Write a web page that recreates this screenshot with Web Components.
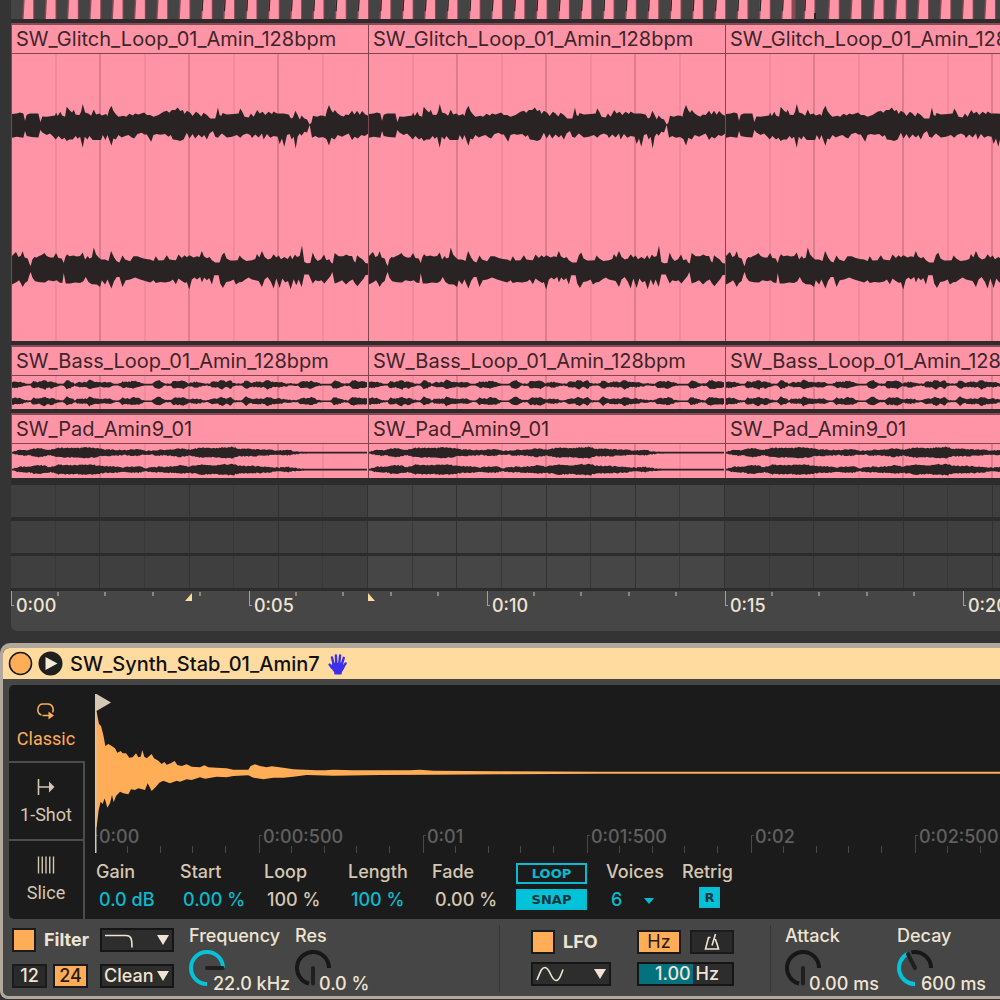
<!DOCTYPE html>
<html lang="en">
<head>
<meta charset="utf-8">
<title>Arrangement</title>
<style>
  body { margin: 0; background: #343434; overflow-x: hidden; font-family: Inter, "Liberation Sans", sans-serif; font-size: 18px; line-height: 22px; color: #efe4d3; }
</style>
</head>
<body>
<daw-arrangement></daw-arrangement>
<sampler-device></sampler-device>

<script>
const define = (name, html, setup) => {
  const template = document.createElement('template');
  template.innerHTML = html;
  customElements.define(name, class extends HTMLElement {
    connectedCallback() {
      if (this.shadowRoot) return;
      this.attachShadow({ mode: 'open' }).append(template.content.cloneNode(true));
      if (setup) setup(this, this.shadowRoot);
    }
  });
};
/* How many timeline pieces of a given width it takes to cover the window. */
const cover = (width, inset = 11) => Math.ceil((window.innerWidth - inset) / width);

/* Outlines are x,y pairs in a space three times finer than the pixels on screen. */
const glitchA = {
  top: '36 342 50 340 60 337 70 340 75 362 80 344 90 340 115 340 121 366 127 349 140 350 155 348 165 346 168 337 173 348 181 335 186 346 195 350 200 320 208 330 216 337 221 329 227 344 238 345 243 335 248 312 255 337 265 340 273 347 281 328 288 343 298 340 305 346 318 342 322 348 327 330 334 317 340 333 348 343 355 350 370 347 378 350 388 341 398 346 405 340 415 343 432 337 440 345 450 345 460 350 475 345 490 335 500 332 507 338 515 330 525 330 533 322 540 333 548 330 553 342 560 332 570 338 577 348 587 335 595 340 603 349 610 338 620 345 630 355 645 355 648 345 653 322 658 345 663 348 667 339 680 343 700 342 715 340 720 325 726 335 733 350 745 352 752 340 760 350 771 330 778 340 787 335 795 345 805 335 815 342 820 334 830 340 850 340 865 343 872 355 878 352 885 332 892 345 898 358 904 346 912 355 920 358 928 373 933 368 938 347 950 350 960 346 970 347 975 350 980 330 986 315 992 330 998 338 1003 330 1012 340 1022 347 1030 349 1036 343 1045 345 1055 332 1062 343 1070 332 1078 344 1085 333 1095 343 1104 348',
  bottom: '36 413 50 410 70 413 75 393 80 408 95 411 115 412 121 390 127 397 140 405 150 400 160 410 167 418 175 408 186 418 193 413 200 423 208 418 218 418 227 408 233 416 240 410 248 443 254 410 262 418 268 408 278 420 290 420 303 420 308 405 316 420 322 405 334 437 340 415 347 418 355 405 365 412 375 408 385 405 395 412 402 415 412 402 425 398 432 403 440 403 453 425 460 405 470 402 480 404 495 402 505 410 512 405 518 418 530 420 540 423 550 418 560 398 568 415 577 402 585 415 595 403 605 412 612 405 620 418 628 400 638 393 645 410 653 413 660 405 665 400 680 412 695 410 710 405 720 413 728 405 740 400 750 405 755 414 765 403 775 412 785 400 790 418 800 402 810 413 820 408 832 410 838 432 845 415 852 440 860 405 868 402 874 418 880 410 886 446 892 410 898 400 904 407 912 395 920 397 928 375 935 413 945 408 955 413 968 411 978 417 986 436 993 413 1003 418 1012 405 1025 410 1035 405 1045 400 1055 420 1063 410 1072 415 1083 405 1093 408 1104 400'
};
const glitchB = {
  top: '36 107 43 100 48 95 55 110 62 107 68 93 74 112 83 115 88 130 92 137 97 118 103 110 110 112 117 107 125 104 133 98 140 107 150 112 160 112 168 98 175 113 185 115 191 128 196 110 201 102 208 108 220 106 230 109 240 107 248 97 255 118 263 107 268 115 275 112 281 82 288 103 296 112 303 118 315 118 325 122 333 92 342 112 350 123 358 127 367 106 375 118 390 123 400 108 412 108 425 113 437 116 450 118 460 122 467 108 475 121 490 120 500 105 508 118 518 119 527 120 535 103 545 113 553 105 560 111 568 105 580 112 590 108 598 110 605 92 611 108 620 114 628 110 635 120 645 127 658 127 665 105 672 97 679 115 690 121 702 121 712 120 718 106 726 115 738 122 755 120 765 116 770 101 777 112 785 92 793 110 803 118 812 115 820 102 828 112 835 106 842 117 852 110 862 116 870 105 876 117 884 103 890 110 898 107 905 76 912 125 920 129 930 128 937 97 944 113 952 122 962 117 971 103 978 120 987 117 992 127 997 130 1003 98 1015 108 1028 108 1038 103 1046 107 1055 107 1061 123 1065 127 1070 105 1078 112 1087 118 1095 128 1104 130',
  bottom: '36 193 50 185 57 180 63 190 68 200 75 188 83 182 88 165 92 155 97 172 105 183 120 186 135 187 145 180 160 183 170 180 178 187 187 188 191 158 197 190 210 190 225 187 240 188 250 183 257 170 265 185 275 192 290 193 300 200 305 180 315 193 322 178 334 205 342 182 350 170 358 170 367 200 377 180 390 178 405 172 420 178 435 182 450 187 460 180 467 188 480 185 495 187 510 184 518 178 527 192 535 175 545 182 555 188 560 185 567 208 575 178 583 172 590 178 600 170 605 187 612 172 620 180 627 173 635 193 642 165 655 165 660 190 668 203 678 185 690 183 700 178 707 193 717 186 725 185 735 178 745 172 755 178 765 180 775 182 785 200 793 178 802 170 812 185 820 205 828 175 838 203 846 175 855 187 863 182 871 207 880 177 888 195 895 178 904 200 912 163 925 163 937 190 945 180 955 183 963 180 972 190 982 178 990 168 996 155 1003 190 1015 185 1025 180 1037 193 1047 183 1057 178 1063 188 1071 198 1080 187 1090 175 1095 165 1104 163'
};
const synth = {
  top: '287 215 290 215 297 252 303 258 310 285 316 318 325 312 335 318 345 325 352 338 362 333 368 340 378 340 388 353 398 352 408 340 415 352 422 350 427 330 433 350 440 355 455 342 462 355 475 362 485 372 493 366 500 374 512 370 524 363 532 375 545 378 560 373 575 380 600 382 613 376 625 382 650 383 680 385 700 389 745 389 752 378 765 373 780 378 800 382 815 379 850 383 880 388 950 391 975 391 1000 389 1060 391 1140 391 1230 391 1260 389 1300 392 1500 394 1800 395 3100 395',
  bottom: '287 560 290 560 296 510 302 485 308 492 314 475 322 503 330 490 336 465 341 487 348 468 360 455 370 460 385 463 393 448 405 450 415 445 435 450 443 430 455 453 468 440 478 428 490 422 510 430 530 422 540 425 560 418 575 420 600 412 615 416 650 410 680 412 700 408 745 406 760 413 790 418 820 413 850 413 880 410 920 405 1000 407 1140 405 1300 404 1500 403 1800 401 3100 401'
};
/* Symmetric outlines: x, half height. */
const bass = '36 10 60 9 80 3 93 2 98 10 112 8 125 10 135 15 143 8 155 11 172 4 190 2 200 13 212 10 225 3 235 8 250 7 262 8 268 15 280 10 300 7 325 8 345 3 358 2 368 10 390 8 402 12 420 8 435 2 458 2 468 11 480 13 495 4 512 3 522 11 540 10 553 13 567 4 585 8 600 7 620 2 632 5 640 9 655 8 668 14 680 7 692 13 705 3 730 3 738 14 755 6 775 9 790 7 805 14 820 8 840 8 862 4 895 3 905 10 925 9 937 12 955 5 970 2 995 2 1005 13 1020 8 1035 3 1050 4 1060 13 1085 10 1104 8';
const pad = '36 2 50 6 70 9 85 8 110 13 125 13 150 8 175 14 200 14 230 13 258 16 285 14 310 10 345 9 375 7 395 9 415 10 440 5 470 8 500 9 520 10 545 13 570 9 605 15 640 13 665 15 700 17 720 11 750 11 780 10 810 8 840 6 865 8 885 5 905 3 940 2 1104 2';

const pairs = text => {
  const n = text.split(' ').map(Number), out = [];
  for (let i = 0; i < n.length; i += 2) out.push([n[i], n[i + 1]]);
  return out;
};
const closed = (top, bottom, dy = 0) =>
  'M' + [...top, ...[...bottom].reverse()].map(([x, y]) => `${x} ${y + dy}`).join('L') + 'Z';
const outline = ({ top, bottom }, dy) => closed(pairs(top), pairs(bottom), dy);
const mirrored = (text, centre, seed) => {
  const points = pairs(text), top = [], bottom = [];
  const noise = n => { const v = Math.sin(n * 127.1 + seed * 311.7) * 43758.5; return (v - Math.floor(v)) * 2 - 1; };
  const half = x => {
    let i = 1;
    while (i < points.length - 1 && points[i][0] < x) i++;
    const [x0, h0] = points[i - 1], [x1, h1] = points[i];
    return h0 + (h1 - h0) * (x - x0) / (x1 - x0);
  };
  for (let x = 36; x <= 1107; x += 4) {
    const h = half(Math.min(x, 1104)), wobble = Math.max(0, Math.min(h - 2, 1.8));
    top.push([x, centre - Math.max(2.4, h + wobble * noise(x))]);
    bottom.push([x, centre + Math.max(2.4, h + wobble * noise(x + .5))]);
  }
  return closed(top, bottom);
};
/* Each view starts just under the clip's title bar. */
const waves = {
  glitch: { box: '36 162 1071 860', d: outline(glitchA, 0) + outline(glitchB, 660) },
  bass: { box: '36 123 1071 102', d: mirrored(bass, 149, 1) + mirrored(bass, 199, 2) },
  pad: { box: '36 327 1071 105', d: mirrored(pad, 353, 3) + mirrored(pad, 404, 4) },
  synth: { box: '285 135 2715 426', d: outline(synth, 0) }
};

define('wave-form', `
  <style>
    :host { display: block; }
    svg { display: block; width: 100%; height: 100%; overflow: visible; }
    path { fill: currentColor; }
  </style>
  <svg preserveAspectRatio="xMinYMin slice" aria-hidden="true"><path/></svg>`,
  (host, root) => {
    const wave = waves[host.getAttribute('kind')];
    root.querySelector('svg').setAttribute('viewBox', wave.box);
    root.querySelector('path').setAttribute('d', wave.d);
  });

define('beat-strip', `
  <style>
    :host { display: block; height: 19px; background: #444; overflow: hidden; }
    svg { display: block; }
  </style>
  <svg width="2000" height="19" aria-hidden="true"></svg>`,
  (host, root) => {
    let marks = '';
    for (let k = 0; k < 88; k++) {
      const x = 12 + k * 22.32 + (k > 35 ? 2 : 0);
      marks += `<path fill="#8a4a55" d="M${x - .8} 19L${x + .2} 0h11v19z"/>`
        + `<path fill="#ff94a7" d="M${x + .6} 19L${x + 1.6} 0h8.6v19z"/>`;
      if (k > 7 && k < 36) marks += `<path fill="#2a2323" d="M${x} 11L${x + .8} 0h1l-.6 11z"/>`;
    }
    marks += '<path fill="#8a4a55" d="M780.500 0h4v19h-4z"/><path fill="#2a2323" d="M803 13h2v6h-2z"/>';
    root.querySelector('svg').innerHTML = marks;
  });

define('audio-clip', `
  <style>
    :host { display: flex; flex-direction: column; flex: none; box-sizing: border-box; width: 357px; overflow: hidden;
            border-left: 1px solid #80454f; border-top: 2px solid #8a4a55; background: #ff94a7; color: #3d2529; }
    header { flex: none; height: 29px; box-sizing: border-box; border-bottom: 1px solid #80454f; padding: 1px 4px 0;
             white-space: nowrap; font-size: 20px; line-height: 26px; }
    .body { flex: 1; min-height: 0; display: grid; grid-template-columns: repeat(8, 1fr); }
    i { grid-row: 1; border-right: 2px solid #f08b9d; }
    i:nth-of-type(even) { border-color: #dc7d8e; }
    i:last-of-type { border: 0; }
    wave-form { grid-row: 1; grid-column: 1 / -1; color: #292323; }
  </style>
  <header><slot></slot></header>
  <div class="body"><i></i><i></i><i></i><i></i><i></i><i></i><i></i><i></i></div>`,
  (host, root) => {
    const wave = document.createElement('wave-form');
    wave.setAttribute('kind', host.getAttribute('kind'));
    root.querySelector('.body').append(wave);
    root.querySelectorAll('i').forEach((line, n) => { line.style.gridColumn = n + 1; });
  });

define('clip-track', `
  <style>
    :host { display: flex; overflow: hidden; }
  </style>`,
  (host, root) => {
    for (let n = 0; n < cover(357); n++) {
      const clip = document.createElement('audio-clip');
      clip.setAttribute('kind', host.getAttribute('kind'));
      clip.textContent = host.getAttribute('name');
      root.append(clip);
    }
  });

define('empty-lane', `
  <style>
    :host { display: flex; overflow: hidden; height: 32px; }
    div { flex: none; box-sizing: border-box; width: 357px; display: grid; grid-template-columns: repeat(8, 1fr); background: #3f3f3f; }
    div:nth-of-type(even) { background: #464646; }
    i { border-right: 1px solid #383838; }
    i:nth-of-type(even) { border-color: #313131; }
  </style>`,
  (host, root) => {
    for (let n = 0; n < cover(357); n++) {
      const bar = document.createElement('div');
      bar.innerHTML = '<i></i>'.repeat(8);
      root.append(bar);
    }
  });

define('song-ruler', `
  <style>
    :host { display: flex; position: relative; overflow: hidden; height: 40px; background: #464646; border-bottom-left-radius: 6px; font-weight: 500; }
    .span { flex: none; width: 238px; display: grid; grid-template-columns: repeat(5, 1fr); align-items: start; }
    .major { grid-area: 1 / 1 / 2 / 3; border-left: 1px solid #a89f94; height: 15px; display: flex; }
    .major::before { content: ""; width: 2px; border-bottom: 1px solid #a89f94; }
    .major span { padding-left: 2px; line-height: 30px; }
    .minor { grid-row: 1; justify-self: end; width: 2px; height: 4px; background: #8c857c; margin-top: 1px; }
    svg { position: absolute; top: 2px; width: 7px; height: 8px; fill: #ffdb9f; }
    .start { left: 174px; } .end { left: 357px; }
  </style>
  <svg class="start" viewBox="0 0 7 8"><path d="M7 0v8H0z"/></svg>
  <svg class="end" viewBox="0 0 7 8"><path d="M0 0v8h7z"/></svg>`,
  (host, root) => {
    for (let n = 0; n < cover(238); n++) {
      const span = document.createElement('div'), s = n * 5;
      span.className = 'span';
      span.innerHTML = `<div class="major"><span>${Math.floor(s / 60)}:${String(s % 60).padStart(2, '0')}</span></div>`
        + [1, 2, 3, 4].map(c => `<div class="minor" style="grid-column:${c}"></div>`).join('');
      root.append(span);
    }
  });

define('daw-arrangement', `
  <style>
    :host { display: block; padding: 0 0 12px 11px; }
    .tracks { background: #2c2c2c; display: flex; flex-direction: column; }
    .glitch { height: 318px; margin: 4px 0; }
    .bass { height: 64px; margin-bottom: 4px; }
    .pad { height: 65px; margin-bottom: 7px; }
    empty-lane { margin-bottom: 3px; }
    empty-lane.gap { margin-bottom: 4px; }
  </style>
  <div class="tracks">
    <beat-strip></beat-strip>
    <clip-track class="glitch" kind="glitch" name="SW_Glitch_Loop_01_Amin_128bpm"></clip-track>
    <clip-track class="bass" kind="bass" name="SW_Bass_Loop_01_Amin_128bpm"></clip-track>
    <clip-track class="pad" kind="pad" name="SW_Pad_Amin9_01"></clip-track>
    <empty-lane class="gap"></empty-lane>
    <empty-lane></empty-lane>
    <empty-lane></empty-lane>
  </div>
  <song-ruler></song-ruler>`);

define('device-header', `
  <style>
    :host { display: flex; align-items: center; gap: 5px; height: 31px; padding-left: 5px; background: #ffdb9f;
            border-top-left-radius: 6px; color: #111; }
    button { all: unset; display: block; width: 25px; height: 25px; }
    svg { display: block; }
    h2 { margin: 0 3px 0 2px; font-size: 20px; font-weight: 500; line-height: 24px; }
  </style>
  <button aria-pressed="true"><svg width="25" height="25"><circle cx="12.5" cy="12.5" r="11" fill="#ffad56" stroke="#1b1b1b" stroke-width="1.6"/></svg></button>
  <button><svg width="25" height="25"><circle cx="12.5" cy="12.5" r="12" fill="#1f1f1f"/><path fill="#f4e8d8" d="M7.5 6L19.5 12.5 7.5 19z"/></svg></button>
  <h2><slot></slot></h2>
  <svg width="19" height="22" viewBox="0 0 19 22" fill="none" stroke="#3c30ee" stroke-linecap="round">
    <path stroke-width="2.4" d="M5.8 12L4 4.5M8.3 11L7.900 2.400M11.200 11l.9-8.600M13.600 12l2.200-7.200M3.800 14.600L1.600 11.600M14.800 15l2.800-4.600"/>
    <path fill="#3c30ee" stroke-width="1.6" stroke-linejoin="round" d="M5 10.500h9.200l1.400 4.300-2.600 4.400v1.400H7v-1.600L3.400 14z"/>
  </svg>`);

define('mode-tabs', `
  <style>
    :host { display: block; width: 76px; color: #d5c7b2; font: 18px/22px Roboto, sans-serif; }
    fieldset { border: 0; margin: 0; padding: 0; min-width: 0; height: 100%; display: grid; grid-template-rows: 76px 78px 1fr; }
    label { display: flex; flex-direction: column; align-items: center; gap: 8px; box-sizing: border-box; padding-top: 15px;
            border-top: 2px solid #4c4c4c; border-right: 2px solid #4c4c4c; }
    label:first-of-type { border-color: transparent; color: #ffad56; }
    input { position: absolute; opacity: 0; margin: 0; width: 1px; height: 1px; }
    svg { display: block; fill: none; stroke: currentColor; stroke-width: 1.3; }
    .solid { fill: currentColor; stroke: none; }
  </style>
  <fieldset>
    <label><input type="radio" name="mode" checked>
      <svg width="18" height="18"><path d="M4.5 13C-1 11.500 0 2 6 2h5c5 0 6 5.500 4.500 8.500M5.500 13.500H12" stroke-width="1.5"/><path class="solid" d="M11.500 9.500l5.500 4-5.500 4z"/></svg>
      <span>Classic</span></label>
    <label><input type="radio" name="mode">
      <svg width="18" height="18"><path d="M1.5 1v16M1.5 9H12" stroke-width="1.6"/><path class="solid" d="M12 3.5L17.5 9 12 14.5z"/></svg>
      <span>1-Shot</span></label>
    <label><input type="radio" name="mode">
      <svg width="18" height="18"><path d="M1.5 .5v17M5.25 .5v17M9 .5v17M12.75 .5v17M16.5 .5v17" stroke-width="1.4"/></svg>
      <span>Slice</span></label>
  </fieldset>`);

define('sample-ruler', `
  <style>
    :host { display: flex; overflow: hidden; height: 26px; color: #606060; font-weight: 500; }
    .span { flex: none; width: 164px; display: grid; grid-template-columns: repeat(5, 1fr); align-items: end; }
    .major { grid-area: 1 / 1 / 2 / 5; height: 18px; border-left: 1px solid #484848; display: flex; }
    .major::before { content: ""; width: 2px; height: 1px; background: #484848; }
    .major span { padding-left: 1px; line-height: 4px; }
    .minor { grid-row: 1; justify-self: end; width: 1px; height: 7px; background: #484848; }
  </style>`,
  (host, root) => {
    for (let n = 0; n < cover(164, 95); n++) {
      const span = document.createElement('div');
      span.className = 'span';
      span.innerHTML = `<div class="major"><span>0:0${Math.floor(n / 2)}${n % 2 ? ':500' : ''}</span></div>`
        + [1, 2, 3, 4].map(c => `<div class="minor" style="grid-column:${c}"></div>`).join('');
      root.append(span);
    }
  });

define('sample-view', `
  <style>
    :host { display: grid; grid-template-rows: 142px 26px; overflow: hidden; min-width: 0; }
    wave-form { grid-area: 1 / 1; color: #ffad56; min-width: 0; width: 905px; height: 142px; }
    sample-ruler { grid-area: 2 / 1; min-width: 0; }
    svg { grid-area: 1 / 1 / 3 / 2; display: block; width: 20px; height: 168px; fill: #d5c7b2; position: relative; }
  </style>
  <wave-form kind="synth"></wave-form>
  <sample-ruler></sample-ruler>
  <svg aria-hidden="true"><path d="M0 9h1.5L16 17.500 1.500 26V168H0z"/></svg>`);

define('param-field', `
  <style>
    :host { display: flex; flex-direction: column; gap: 6px; width: 84px; color: #d5c7b2; white-space: nowrap; font-weight: 500; }
    output { padding-left: 3px; }
    :host([on]) output { color: #04bdd2; }
  </style>
  <label for="value"><slot></slot></label><output id="value"></output>`,
  (host, root) => { root.querySelector('output').textContent = host.getAttribute('value'); });

define('sample-params', `
  <style>
    :host { display: flex; padding: 8px 0 0 11px; color: #d5c7b2; }
    .buttons { display: flex; flex-direction: column; gap: 5px; width: 71px; padding-top: 2px; margin-right: 19px; }
    button { appearance: none; box-sizing: border-box; height: 21px; padding: 0; margin: 0; border: 2px solid #04bdd2; border-radius: 0;
             background: none; color: #04bdd2; font: bold 13px/17px "DejaVu Sans", sans-serif; }
    button[aria-pressed] { background: #04c3d8; color: #12343a; }
    .voices { display: flex; flex-direction: column; gap: 6px; width: 76px; font-weight: 500; }
    .pick { display: grid; width: 50px; align-items: center; }
    select { grid-area: 1 / 1; appearance: none; border: 0; margin: 0; padding: 0 0 0 5px; background: none; font: inherit; color: #04bdd2; height: 22px; }
    svg { grid-area: 1 / 1; justify-self: end; display: block; fill: #04bdd2; pointer-events: none; }
    .retrig { display: flex; flex-direction: column; gap: 4px; font-weight: 500; }
    .retrig button { width: 21px; margin-left: 17px; }
  </style>
  <param-field on value="0.0 dB">Gain</param-field>
  <param-field on value="0.00 %">Start</param-field>
  <param-field value="100 %">Loop</param-field>
  <param-field on value="100 %">Length</param-field>
  <param-field value="0.00 %">Fade</param-field>
  <div class="buttons"><button>LOOP</button><button aria-pressed="true">SNAP</button></div>
  <div class="voices"><label for="voices">Voices</label>
    <div class="pick"><select id="voices"><option>6</option></select>
      <svg width="14" height="8"><path d="M2 2h10L7 8z"/></svg></div></div>
  <div class="retrig"><label for="retrig">Retrig</label><button id="retrig" aria-pressed="true">R</button></div>`);

define('toggle-box', `
  <style>
    :host { display: flex; align-items: center; gap: 8px; font-weight: 700; }
    input { appearance: none; box-sizing: border-box; width: 24px; height: 24px; margin: 0; border: 2px solid #1b1b1b; background: #ffad56; }
  </style>
  <input type="checkbox" id="box" checked><label for="box"><slot></slot></label>`);

define('menu-box', `
  <style>
    :host { display: grid; align-items: center; height: 24px; box-sizing: border-box; border: 2px solid #151515; background: #2d2d2d; }
    select { grid-area: 1 / 1; appearance: none; border: 0; margin: 0; padding: 0 0 0 2px; background: none; color: inherit;
             font: inherit; font-weight: 500; width: 100%; height: 20px; line-height: 20px; }
    svg { display: block; pointer-events: none; }
    .arrow { grid-area: 1 / 1; justify-self: end; margin-right: 3px; fill: #efe4d3; }
    ::slotted(svg) { grid-area: 1 / 1; pointer-events: none; }
  </style>
  <select><option></option></select>
  <svg class="arrow" width="12" height="10"><path d="M0 0h12L6 10z"/></svg>
  <slot></slot>`,
  (host, root) => { root.querySelector('option').textContent = host.getAttribute('value') || ''; });

define('dial-knob', `
  <style>
    :host { display: block; white-space: nowrap; font-weight: 500; }
    label { display: block; }
    .dial { display: grid; height: 47px; padding-top: 3px; box-sizing: border-box; }
    svg, input { grid-area: 1 / 1; width: 36px; height: 36px; display: block; }
    input { opacity: 0; margin: 0; }
    output { grid-area: 1 / 1; align-self: end; padding-left: 24px; line-height: 20px; }
    path { fill: none; stroke-width: 4; }
  </style>
  <label for="dial"><slot></slot></label>
  <div class="dial">
    <svg viewBox="-18 -18 36 36"><path class="rest" stroke="#171717"/><path class="fill" stroke="#04c3d8"/>
      <path class="hand" stroke="#1f1f1f" stroke-linecap="round"/></svg>
    <input type="range" id="dial" min="0" max="270">
    <output for="dial"></output>
  </div>`,
  (host, root) => {
    const sweep = Number(host.getAttribute('sweep'));
    /* Angle runs clockwise from the bottom of the dial. */
    const at = (a, r) => { const t = a * Math.PI / 180; return `${-r * Math.sin(t)} ${r * Math.cos(t)}`; };
    const arc = (a, b) => `M${at(a, 16)}A16 16 0 ${b - a > 180 ? 1 : 0} 1 ${at(b, 16)}`;
    root.querySelector('input').value = sweep;
    root.querySelector('output').textContent = host.getAttribute('value');
    if (sweep < 270) root.querySelector('.rest').setAttribute('d', arc(sweep + 14, 270));
    if (sweep > 0) root.querySelector('.fill').setAttribute('d', arc(0, sweep));
    root.querySelector('.hand').setAttribute('d', `M0 0L${at(sweep, 15.5)}`);
  });

define('device-controls', `
  <style>
    :host { display: flex; height: 77px; padding-left: 3px; box-sizing: border-box; }
    section { flex: none; display: flex; box-sizing: border-box; }
    section.filter { width: 487px; padding-top: 6px; }
    section.lfo { width: 270px; padding: 11px 0 0 31px; display: grid; grid-template-columns: 80px 97px; gap: 8px 26px; align-content: start; }
    section.env { padding: 6px 0 0 14px; }
    hr { flex: none; width: 1px; height: 67px; margin: 6px 0 0; border: 0; background: #353535; }
    .left { display: grid; grid-template-columns: 78px 74px; gap: 12px 10px; padding-top: 3px; margin-right: 15px; align-content: start; }
    .pair { display: flex; justify-content: space-between; }
    .left .pair { width: 76px; }
    button { appearance: none; box-sizing: border-box; width: 35px; height: 24px; border: 2px solid #1b1b1b; border-radius: 0; padding: 0; margin: 0;
             background: #2a2a2a; color: #efe4d3; font: 500 18px/20px Inter, sans-serif; display: grid; place-items: center; }
    .lfo button { width: 44px; font-weight: 400; }
    button[aria-pressed] { background: #ffad56; color: #2a1c0c; }
    toggle-box { white-space: nowrap; }
    svg { display: block; fill: none; stroke: #efe4d3; stroke-width: 1.6; }
    dial-knob { width: 106px; }
    .env dial-knob { width: 112px; }
    .rate { display: grid; height: 24px; box-sizing: border-box; border: 2px solid #151515;
            background: linear-gradient(90deg, #04717f 58%, #2d2d2d 58%); }
    .rate input, .rate output { grid-area: 1 / 1; }
    .rate input { opacity: 0; margin: 0; width: 100%; height: 20px; }
    .rate output { text-align: right; padding-right: 13px; font-weight: 500; line-height: 20px; }
  </style>
  <section class="filter">
    <div class="left">
      <toggle-box>Filter</toggle-box>
      <menu-box><svg width="34" height="16"><path d="M3 3.500h21c5 0 6 3 6 12"/></svg></menu-box>
      <div class="pair"><button>12</button><button aria-pressed="true">24</button></div>
      <menu-box value="Clean"></menu-box>
    </div>
    <dial-knob sweep="270" value="22.0 kHz">Frequency</dial-knob>
    <dial-knob sweep="0" value="0.0 %">Res</dial-knob>
  </section>
  <hr>
  <section class="lfo">
    <toggle-box>LFO</toggle-box>
    <div class="pair"><button aria-pressed="true">Hz</button>
      <button><svg width="16" height="18"><path d="M6.500 4.500H4.500L1.500 16h13L12.800 10M11.500 1L8 12.500M11.300 6l1.700 5"/></svg></button></div>
    <menu-box><svg width="34" height="18"><path d="M4 15C8 5 9 2.500 12 2.500c5 0 6 13 11 13 3 0 4-3 7-11"/></svg></menu-box>
    <div class="rate"><input type="range" id="rate" aria-label="1.00 Hz"><output for="rate">1.00 Hz</output></div>
  </section>
  <hr>
  <section class="env">
    <dial-knob sweep="0" value="0.00 ms">Attack</dial-knob>
    <dial-knob sweep="153" value="600 ms">Decay</dial-knob>
  </section>`);

define('sampler-device', `
  <style>
    :host { display: block; box-sizing: border-box; overflow: hidden; border: solid #b3a89c; border-width: 5px 0 3px 3px;
            border-radius: 10px 0 0 8px; background: #464646; }
    .inner { padding: 6px 0 0 6px; }
    .panel { display: grid; grid-template-columns: 76px minmax(0, 1fr); height: 234px; background: #1b1b1b; border-radius: 5px 0 0 5px; overflow: hidden; }
    .main { padding-left: 10px; display: flex; flex-direction: column; min-width: 0; }
    sample-params { margin-left: -10px; }
    device-controls { margin-top: 0; }
  </style>
  <device-header>SW_Synth_Stab_01_Amin7</device-header>
  <div class="inner">
    <div class="panel">
      <mode-tabs></mode-tabs>
      <div class="main"><sample-view></sample-view><sample-params></sample-params></div>
    </div>
    <device-controls></device-controls>
  </div>`);
</script>
</body>
</html>
